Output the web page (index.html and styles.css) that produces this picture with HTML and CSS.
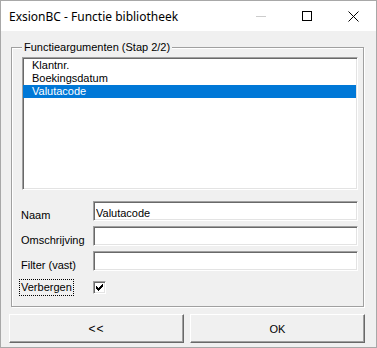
FILE: index.html
```html
<!DOCTYPE html>
<html>
<head>
    <title>ExsionBC - Functie bibliotheek</title>
    <link rel="stylesheet" href="styles.css">
</head>
<body>
    <div class="venster">
        <div class="titelbalk">
            <span class="titel">ExsionBC - Functie bibliotheek</span>
            <div class="vensterknoppen">
                <span class="vknop">
                    <svg width="10" height="10" viewBox="0 0 10 10"><path d="M0 5.5h10" stroke="#cccccc" stroke-width="1"/></svg>
                </span>
                <span class="vknop">
                    <svg width="10" height="10" viewBox="0 0 10 10"><rect x="0.5" y="0.5" width="9" height="9" fill="none" stroke="#000" stroke-width="1"/></svg>
                </span>
                <span class="vknop">
                    <svg width="11" height="11" viewBox="0 0 11 11"><path d="M0.5 0.5L10.5 10.5M10.5 0.5L0.5 10.5" stroke="#000" stroke-width="1"/></svg>
                </span>
            </div>
        </div>

        <div class="inhoud">
            <fieldset class="groep">
                <legend>Functieargumenten (Stap 2/2)</legend>
                <ul class="lijst">
                    <li>Klantnr.</li>
                    <li>Boekingsdatum</li>
                    <li class="geselecteerd">Valutacode</li>
                </ul>
                <div class="velden">
                    <label class="veldnaam">Naam</label>
                    <input class="tekstvak" type="text" value="Valutacode">
                    <label class="veldnaam">Omschrijving</label>
                    <input class="tekstvak" type="text" value="">
                    <label class="veldnaam">Filter (vast)</label>
                    <input class="tekstvak" type="text" value="">
                    <label class="veldnaam focus">Verbergen</label>
                    <span class="vinkje">
                        <svg width="7" height="7" viewBox="0 0 7 7" shape-rendering="crispEdges"><path d="M6 0h1v1h-1z M5 1h2v1h-2z M0 2h1v1h-1z M4 2h3v1h-3z M0 3h2v1h-2z M3 3h3v1h-3z M0 4h5v1h-5z M1 5h3v1h-3z M2 6h1v1h-1z" fill="#000"/></svg>
                    </span>
                </div>
            </fieldset>
        </div>

        <div class="onderkant">
            <button class="knop terug">&lt;&lt;</button>
            <button class="knop">OK</button>
        </div>
    </div>
</body>
</html>
```

FILE: styles.css
```css
body {
    margin: 0;
    font-family: "Liberation Sans", Arial, sans-serif;
    font-size: 11px;
    color: #000;
}

.venster {
    width: 377px;
    height: 348px;
    box-sizing: border-box;
    border: 1px solid #a8a8a8;
    background-color: #f0f0f0;
}

.titelbalk {
    height: 30px;
    display: flex;
    align-items: center;
    background-color: #fff;
    padding-left: 8px;
}

.titel {
    font-family: "Noto Sans", sans-serif;
    font-size: 12px;
    flex: 1;
}

.vensterknoppen {
    display: flex;
    height: 30px;
}

.vknop {
    width: 46px;
    height: 30px;
    display: flex;
    align-items: center;
    justify-content: center;
}

.inhoud {
    padding: 10px 12px 0 10px;
}

.groep {
    margin: 0;
    padding: 3px 5px 10px 10px;
    border: 1px solid #a0a0a0;
    box-shadow: 1px 1px 0 #fff, inset 1px 1px 0 #fff;
    min-width: 0;
}

.groep legend {
    padding: 0 2px;
    line-height: 13px;
    background-color: #f0f0f0;
}

.lijst {
    list-style: none;
    margin: 0;
    padding: 1px 0 0;
    height: 133px;
    box-sizing: border-box;
    background-color: #fff;
    border: 1px solid;
    border-color: #a0a0a0 #fff #fff #a0a0a0;
    box-shadow: inset 1px 1px 0 #696969, inset -1px -1px 0 #e3e3e3;
}

.lijst li {
    height: 13px;
    line-height: 13px;
    padding-left: 9px;
    margin-right: 1px;
}

.lijst li.geselecteerd {
    background-color: #0078d7;
    color: #fff;
}

.velden {
    display: grid;
    grid-template-columns: 71px 1fr;
    row-gap: 4px;
    margin-top: 11px;
}

.veldnaam {
    line-height: 13px;
    padding-top: 8px;
    margin-left: -1px;
}

.veldnaam.focus {
    justify-self: start;
    padding: 1px;
    margin: 3px 0 0 -3px;
    border: 1px dotted #000;
}

.tekstvak {
    height: 20px;
    width: 100%;
    box-sizing: border-box;
    margin: 0;
    padding: 3px 2px 0;
    font-family: "Liberation Sans", Arial, sans-serif;
    font-size: 11px;
    color: #000;
    background-color: #fff;
    border: 1px solid;
    border-color: #a0a0a0 #fff #fff #a0a0a0;
    box-shadow: inset 1px 1px 0 #696969, inset -1px -1px 0 #e3e3e3;
    outline: none;
}

.vinkje {
    width: 13px;
    height: 13px;
    box-sizing: border-box;
    margin-top: 5px;
    margin-bottom: 2px;
    display: flex;
    align-items: center;
    justify-content: center;
    background-color: #fff;
    border: 1px solid;
    border-color: #a0a0a0 #fff #fff #a0a0a0;
    box-shadow: inset 1px 1px 0 #696969, inset -1px -1px 0 #e3e3e3;
}

.onderkant {
    display: flex;
    gap: 6px;
    padding: 7px 8px 7px;
}

.knop {
    width: 175px;
    height: 29px;
    margin: 0;
    padding: 0;
    font-family: "Liberation Sans", Arial, sans-serif;
    font-size: 11px;
    color: #000;
    background-color: #f0f0f0;
    border: 1px solid;
    border-color: #fff #696969 #696969 #fff;
    box-shadow: inset -1px -1px 0 #a0a0a0;
}

.knop.terug {
    font-size: 12px;
    letter-spacing: 1px;
}
```
